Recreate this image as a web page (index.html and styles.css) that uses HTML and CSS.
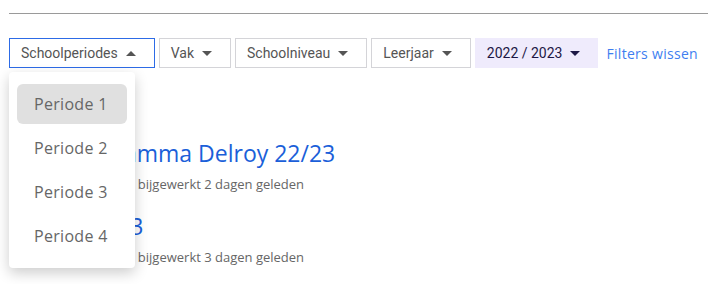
FILE: index.html
```html
<!DOCTYPE html>
<html>
<head>
    <title>Jaarprogramma's</title>
    <link rel="stylesheet" href="styles.css">
</head>
<body>
    <div class="page">
        <hr class="divider">

        <div class="filters">
            <div class="filter-wrap">
                <button class="filter active">Schoolperiodes <span class="caret up"></span></button>
                <ul class="menu">
                    <li class="menu-item selected">Periode 1</li>
                    <li class="menu-item">Periode 2</li>
                    <li class="menu-item">Periode 3</li>
                    <li class="menu-item">Periode 4</li>
                </ul>
            </div>
            <button class="filter">Vak <span class="caret"></span></button>
            <button class="filter">Schoolniveau <span class="caret"></span></button>
            <button class="filter">Leerjaar <span class="caret"></span></button>
            <button class="filter year">2022 / 2023 <span class="caret"></span></button>
            <a class="clear" href="#">Filters wissen</a>
        </div>

        <ul class="programs">
            <li class="program">
                <span class="program-icon"></span>
                <div>
                    <a class="program-title" href="#">Programma Delroy 22/23</a>
                    <p class="program-meta">Eigen plan · bijgewerkt 2 dagen geleden</p>
                </div>
            </li>
            <li class="program">
                <span class="program-icon"></span>
                <div>
                    <a class="program-title" href="#">Week 3</a>
                    <p class="program-meta">Eigen plan · bijgewerkt 3 dagen geleden</p>
                </div>
            </li>
        </ul>
    </div>
</body>
</html>
```

FILE: styles.css
```css
body {
    margin: 0;
    background-color: #fff;
    font-family: "Open Sans", "DejaVu Sans", sans-serif;
}

.page {
    padding: 13px 0 0 9px;
}

.divider {
    border: none;
    border-top: 1px solid #9a9a9a;
    margin: 0 0 24px 0;
}

.filters {
    display: flex;
    align-items: center;
    gap: 4px;
}

.filter-wrap {
    position: relative;
}

.filter {
    display: flex;
    align-items: center;
    gap: 8px;
    height: 30px;
    padding: 0 18px 0 11px;
    border: 1px solid #d4d4d8;
    background-color: #fff;
    color: #555;
    font-family: Roboto, "Liberation Sans", sans-serif;
    font-size: 14px;
    cursor: pointer;
}

.filter.active {
    border-color: #2d6be6;
}

.filter.year {
    background-color: #efebfc;
    border-color: #efebfc;
    color: #1d1845;
    padding: 0 17px 0 11px;
}

.caret {
    width: 0;
    height: 0;
    border-left: 5px solid transparent;
    border-right: 5px solid transparent;
    border-top: 5px solid #555;
}

.caret.up {
    border-top: none;
    border-bottom: 5px solid #555;
}

.filter.year .caret {
    border-top-color: #1d1845;
}

.clear {
    margin-left: 4px;
    color: #3e7ef0;
    font-size: 14px;
    letter-spacing: 0.3px;
    text-decoration: none;
}

.menu {
    position: absolute;
    top: 34px;
    left: 0;
    z-index: 2;
    width: 110px;
    margin: 0;
    padding: 12px 8px;
    list-style: none;
    background-color: #fff;
    border-radius: 4px;
    box-shadow: 0 5px 14px rgba(0, 0, 0, 0.2);
}

.menu-item {
    height: 40px;
    line-height: 40px;
    padding-left: 17px;
    margin-bottom: 4px;
    border-radius: 6px;
    color: #666;
    font-size: 16px;
    letter-spacing: 0.3px;
}

.menu-item:last-child {
    margin-bottom: 0;
}

.menu-item.selected {
    background-color: #e0e0e0;
}

.programs {
    list-style: none;
    margin: 70px 0 0 0;
    padding: 0;
}

.program {
    display: flex;
    gap: 16px;
    margin-bottom: 18px;
}

.program-icon {
    width: 40px;
    height: 30px;
    border-radius: 4px;
    background-color: #f7dce4;
}

.program-title {
    display: block;
    color: #1b5fd9;
    font-size: 23px;
    font-weight: 500;
    line-height: 30px;
    text-decoration: none;
}

.program-meta {
    margin: 7px 0 0 0;
    color: #666;
    font-size: 13px;
    line-height: 18px;
}
```
